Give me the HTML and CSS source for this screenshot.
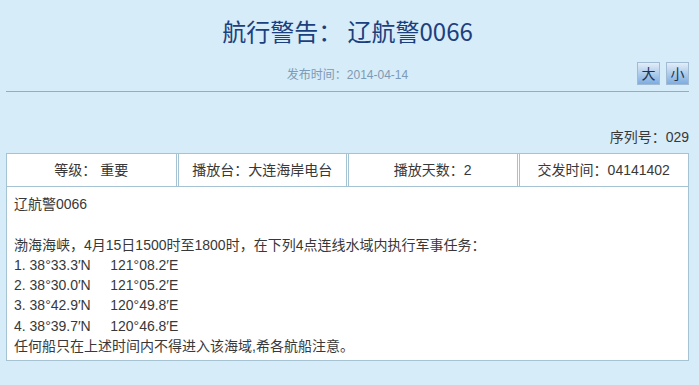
FILE: index.html
```html
<!DOCTYPE html>
<html>
  <head>
    <meta charset="utf-8">
    <link rel="stylesheet" href="styles.css">
  </head>
  <body>
    <div class="notice">
      <h1 class="notice__title">航行警告： 辽航警0066</h1>
      <div class="notice__meta">
        <span></span>
        <span class="notice__date">发布时间：2014-04-14</span>
        <span class="notice__sizes">
          <span class="size-btn">大</span>
          <span class="size-btn">小</span>
        </span>
      </div>
      <div class="notice__serial">序列号：029</div>
      <div class="info">
        <div class="info__cell info__cell--first">等级： 重要</div>
        <div class="info__cell">播放台：大连海岸电台</div>
        <div class="info__cell">播放天数：2</div>
        <div class="info__cell info__cell--last">交发时间：04141402</div>
      </div>
      <div class="notice__body">
        辽航警0066<br>
        <br>
        渤海海峡，4月15日1500时至1800时，在下列4点连线水域内执行军事任务：<br>
        1. 38°33.3′N&nbsp;&nbsp;&nbsp;&nbsp;&nbsp;121°08.2′E<br>
        2. 38°30.0′N&nbsp;&nbsp;&nbsp;&nbsp;&nbsp;121°05.2′E<br>
        3. 38°42.9′N&nbsp;&nbsp;&nbsp;&nbsp;&nbsp;120°49.8′E<br>
        4. 38°39.7′N&nbsp;&nbsp;&nbsp;&nbsp;&nbsp;120°46.8′E<br>
        任何船只在上述时间内不得进入该海域,希各航船注意。
      </div>
    </div>
  </body>
</html>
```
FILE: styles.css
```css
body {
  margin: 0;
  background: #d6ecf8;
  font-family: "Liberation Sans", "Noto Sans CJK SC", sans-serif;
  color: #383838;
}
.notice {
  padding: 0 10px 0 6px;
}
.notice__title {
  margin: 0;
  padding-top: 14px;
  text-align: center;
  font-family: "Noto Sans CJK SC", sans-serif;
  font-weight: normal;
  font-size: 24px;
  line-height: 34px;
  color: #1c3f7e;
}
.notice__meta {
  display: grid;
  grid-template-columns: 1fr auto 1fr;
  align-items: center;
  margin-top: 14px;
  padding-bottom: 6px;
  border-bottom: 1px solid #8eb0c6;
}
.notice__date {
  font-size: 12px;
  color: #7d9ab6;
}
.notice__sizes {
  display: flex;
  justify-content: flex-end;
  gap: 6px;
}
.size-btn {
  width: 21px;
  height: 21px;
  line-height: 20px;
  text-align: center;
  font-family: "Noto Sans CJK SC", sans-serif;
  font-size: 14px;
  color: #1d3352;
  border: 1px solid #a3bbd2;
  background: linear-gradient(#e2edf8, #7dade0);
  user-select: none;
}
.notice__serial {
  margin: 35px 0 6px 0;
  text-align: right;
  font-size: 14px;
  line-height: 20px;
}
.info {
  display: grid;
  grid-template-columns: repeat(4, 1fr);
  gap: 1px;
  background: #fff;
  border: 1px solid #a6c3d3;
  font-size: 14px;
}
.info__cell {
  text-align: center;
  line-height: 32px;
  border-left: 1px solid #a6c3d3;
  border-right: 1px solid #a6c3d3;
}
.info__cell--first {
  border-left: none;
}
.info__cell--last {
  border-right: none;
}
.notice__body {
  background: #fff;
  border: 1px solid #a6c3d3;
  border-top: none;
  padding: 7px 8px 4px 7px;
  font-size: 14px;
  line-height: 20.3px;
}
```
